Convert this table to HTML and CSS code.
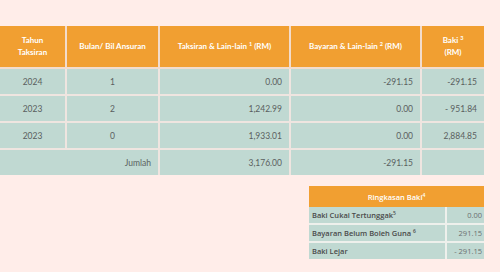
FILE: index.html
```html
<!DOCTYPE html>
<html>
<head>
<meta charset="utf-8">
<link rel="stylesheet" href="styles.css">
</head>
<body>
<div class="page">
  <table class="main">
    <colgroup>
      <col class="c1"><col class="c2"><col class="c3"><col class="c4"><col class="c5">
    </colgroup>
    <thead>
      <tr>
        <th>Tahun<br>Taksiran</th>
        <th>Bulan/ Bil Ansuran</th>
        <th>Taksiran &amp; Lain-lain <sup>1</sup> (RM)</th>
        <th>Bayaran &amp; Lain-lain <sup>2</sup> (RM)</th>
        <th>Baki <sup>3</sup><br>(RM)</th>
      </tr>
    </thead>
    <tbody>
      <tr><td class="ctr">2024</td><td class="ctr">1</td><td class="num">0.00</td><td class="num">-291.15</td><td class="num">-291.15</td></tr>
      <tr><td class="ctr">2023</td><td class="ctr">2</td><td class="num">1,242.99</td><td class="num">0.00</td><td class="num">- 951.84</td></tr>
      <tr><td class="ctr">2023</td><td class="ctr">0</td><td class="num">1,933.01</td><td class="num">0.00</td><td class="num">2,884.85</td></tr>
      <tr><td class="num" colspan="2">Jumlah</td><td class="num">3,176.00</td><td class="num">-291.15</td><td></td></tr>
    </tbody>
  </table>

  <div class="summary-wrap">
    <table class="summary">
      <colgroup><col class="s1"><col class="s2"></colgroup>
      <thead>
        <tr><th colspan="2">Ringkasan Baki<sup>4</sup></th></tr>
      </thead>
      <tbody>
        <tr><td>Baki Cukai Tertunggak<sup>5</sup></td><td class="num">0.00</td></tr>
        <tr><td>Bayaran Belum Boleh Guna <sup>6</sup></td><td class="num">291.15</td></tr>
        <tr><td>Baki Lejar</td><td class="num">- 291.15</td></tr>
      </tbody>
    </table>
  </div>
</div>
</body>
</html>
```

FILE: styles.css
```css
html, body {
  margin: 0;
  padding: 0;
  background: #ffede9;
}
body {
  font-family: "Lato", "Open Sans", sans-serif;
  width: 500px;
  height: 272px;
  overflow: hidden;
}
.page {
  padding-top: 26px;
  width: 484px;
}
table {
  border-collapse: collapse;
  table-layout: fixed;
}
.main {
  width: 484px;
}
.c1 { width: 66px; }
.c2 { width: 93px; }
.c3 { width: 131px; }
.c4 { width: 131px; }
.c5 { width: 63px; }

.main th {
  background: #f19f31;
  color: #fff;
  font-weight: 700;
  font-size: 8px;
  line-height: 11.5px;
  height: 42px;
  padding: 0 4px;
  text-align: center;
  border-right: 2px solid #f3dccb;
  border-bottom: 2px solid #f3dccb;
  box-sizing: border-box;
}
.main th:last-child { border-right: none; }
.main sup {
  font-size: 5.5px;
  line-height: 0;
  vertical-align: 3px;
}
.main td {
  background: #c0d9d2;
  color: #5a5f60;
  font-size: 8.5px;
  height: 25px;
  padding: 0 7px;
  border-right: 2px solid #efe5e0;
  border-bottom: 2px solid #efe5e0;
}
.main td:last-child { border-right: none; }
.main tbody tr:last-child td { border-bottom: none; }
.ctr { text-align: center; }
.num { text-align: right; }

.summary-wrap {
  display: flex;
  justify-content: flex-end;
  margin-top: 11px;
}
.summary {
  width: 175px;
  font-family: "Open Sans", sans-serif;
}
.s1 { width: 137px; }
.s2 { width: 38px; }
.summary th {
  background: #f19f31;
  color: #fff;
  font-size: 7.5px;
  font-weight: 600;
  height: 21px;
  padding: 0;
  text-align: center;
}
.summary sup {
  font-size: 5px;
  line-height: 0;
  vertical-align: 3px;
}
.summary td {
  background: #c0d9d2;
  color: #4a4a4a;
  font-size: 7.5px;
  font-weight: 600;
  height: 16px;
  padding: 0 2px 0 3px;
  border-bottom: 2px solid #eef0ec;
  border-right: 2px solid #eef0ec;
  white-space: nowrap;
}
.summary td.num {
  color: #6b6f70;
  font-weight: 400;
  border-right: none;
}
.summary tbody tr:last-child td { border-bottom: none; }
```
